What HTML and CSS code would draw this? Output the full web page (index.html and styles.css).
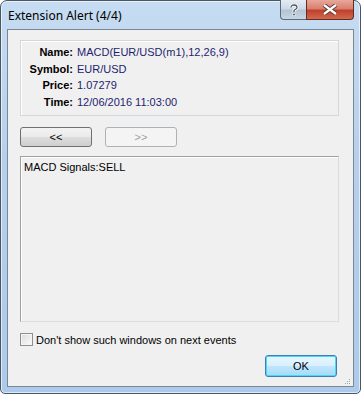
FILE: index.html
```html
<!DOCTYPE html>
<html lang="en">
<head>
    <meta charset="UTF-8">
    <title>Extension Alert (4/4)</title>
    <link rel="stylesheet" href="styles.css">
</head>
<body>
    <div class="window">
        <div class="titlebar">
            <span class="title">Extension Alert (4/4)</span>
            <div class="caption-buttons">
                <div class="cap-btn help">
                    <svg width="10" height="12" viewBox="0 0 10 12">
                        <path d="M2 3.5 C2 1.5 3.5 1 5 1 C6.8 1 8 2 8 3.4 C8 5 6 5.2 5 6.6 L5 8" fill="none" stroke="#fff" stroke-width="3"/>
                        <path d="M2 3.5 C2 1.5 3.5 1 5 1 C6.8 1 8 2 8 3.4 C8 5 6 5.2 5 6.6 L5 8" fill="none" stroke="#4a5560" stroke-width="1.3"/>
                        <rect x="3.8" y="9.3" width="2.4" height="2.4" fill="#4a5560" stroke="#fff" stroke-width="0.6"/>
                    </svg>
                </div>
                <div class="cap-btn close">
                    <svg width="16" height="11" viewBox="0 0 16 11">
                        <path d="M2 1 L14 10 M14 1 L2 10" stroke="#5a3a34" stroke-width="4.2"/>
                        <path d="M2 1 L14 10 M14 1 L2 10" stroke="#fff" stroke-width="2.2"/>
                    </svg>
                </div>
            </div>
        </div>

        <div class="client">
            <div class="info">
                <div class="row"><span class="label">Name:</span><span class="value">MACD(EUR/USD(m1),12,26,9)</span></div>
                <div class="row"><span class="label">Symbol:</span><span class="value">EUR/USD</span></div>
                <div class="row"><span class="label">Price:</span><span class="value">1.07279</span></div>
                <div class="row"><span class="label">Time:</span><span class="value">12/06/2016 11:03:00</span></div>
            </div>

            <div class="nav">
                <button class="btn">&lt;&lt;</button>
                <button class="btn" disabled>&gt;&gt;</button>
            </div>

            <div class="message">MACD Signals:SELL</div>

            <label class="check">
                <span class="box"></span>
                Don't show such windows on next events
            </label>

            <div class="footer">
                <button class="btn ok">OK</button>
            </div>
            <div class="grip">
                <svg width="7" height="7" viewBox="0 0 7 7">
                    <rect x="5" y="1" width="1" height="1" fill="#a0a8b0"/>
                    <rect x="3" y="3" width="1" height="1" fill="#a0a8b0"/>
                    <rect x="5" y="3" width="1" height="1" fill="#a0a8b0"/>
                    <rect x="1" y="5" width="1" height="1" fill="#a0a8b0"/>
                    <rect x="3" y="5" width="1" height="1" fill="#a0a8b0"/>
                    <rect x="5" y="5" width="1" height="1" fill="#a0a8b0"/>
                </svg>
            </div>
        </div>
    </div>
</body>
</html>
```

FILE: styles.css
```css
body {
    margin: 0;
    font-family: "Liberation Sans", Arial, sans-serif;
    font-size: 11px;
    background: #ffffff;
}
.window {
    width: 359px;
    height: 392px;
    border: 1px solid #4a5866;
    border-radius: 7px 7px 5px 5px;
    background: linear-gradient(to bottom, #c6dcf2 0%, #b6d0ec 40%, #aecaea 100%);
    box-shadow: inset 0 0 0 1px rgba(255, 255, 255, 0.6);
    display: flex;
    flex-direction: column;
}
.titlebar {
    height: 28px;
    display: flex;
    align-items: flex-start;
    justify-content: space-between;
    padding-left: 7px;
}
.title {
    font-family: "Noto Sans", "Open Sans", sans-serif;
    font-size: 12px;
    color: #000;
    margin-top: 6px;
}
.caption-buttons {
    display: flex;
    margin-right: 6px;
    margin-top: -1px;
}
.cap-btn {
    height: 19px;
    display: flex;
    align-items: center;
    justify-content: center;
    border: 1px solid #5a6a7a;
    border-top: none;
}
.help {
    width: 25px;
    border-radius: 0 0 0 4px;
    border-right: none;
    background: linear-gradient(to bottom, #e4ecf4 0%, #cdd9e6 45%, #b4c4d6 55%, #c8d6e4 100%);
}
.close {
    width: 46px;
    border-radius: 0 0 4px 0;
    border-color: #6a2a20;
    background: linear-gradient(to bottom, #e8a898 0%, #d88070 45%, #c0402a 55%, #d06a50 100%);
}
.client {
    flex: 1;
    margin: 0 6px 6px 6px;
    border: 1px solid #7a8896;
    background: #f0f0f0;
    padding: 10px 14px 0 12px;
    display: flex;
    flex-direction: column;
    position: relative;
}
.info {
    height: 74px;
    border: 1px solid #d2d9de;
    box-shadow: inset 1px 1px 0 #ffffff;
    padding-top: 3px;
    box-sizing: border-box;
    height: 76px;
}
.row {
    display: flex;
    height: 16.5px;
    align-items: center;
}
.label {
    width: 52px;
    text-align: right;
    font-weight: bold;
    color: #000;
    padding-right: 4px;
}
.value {
    color: #1e1e6e;
}
.nav {
    display: flex;
    gap: 13px;
    margin-top: 11px;
}
.btn {
    width: 72px;
    height: 20px;
    font-family: "Liberation Sans", Arial, sans-serif;
    font-size: 11px;
    color: #000;
    border: 1px solid #707070;
    border-radius: 3px;
    background: linear-gradient(to bottom, #f2f2f2 0%, #ebebeb 48%, #dddddd 52%, #cfcfcf 100%);
    padding: 0;
}
.btn:disabled {
    border-color: #adb2b5;
    background: #f4f4f4;
    color: #a0a0a0;
}
.message {
    margin-top: 9px;
    height: 166px;
    box-sizing: border-box;
    border: 1px solid;
    border-color: #a0a0a0 #dcdcdc #dcdcdc #a0a0a0;
    box-shadow: inset 1px 1px 0 #ffffff;
    padding: 4px 3px;
    color: #000;
}
.check {
    display: flex;
    align-items: center;
    margin-top: 11px;
    color: #000;
}
.box {
    width: 11px;
    height: 11px;
    border: 1px solid #8e8f8f;
    background: linear-gradient(135deg, #dcdcdc, #fbfbfb);
    box-shadow: inset 0 0 0 1px #f4f4f4;
    margin-right: 3px;
}
.footer {
    display: flex;
    justify-content: flex-end;
    margin-top: 9px;
}
.ok {
    width: 72px;
    height: 22px;
    border: 1px solid #3c7fb1;
    box-shadow: inset 0 0 0 1px #48d8fc;
    background: linear-gradient(to bottom, #eaf6fd 0%, #d9f0fc 48%, #bee6fd 52%, #a7d9f5 100%);
    margin-right: 2px;
}
.grip {
    position: absolute;
    right: 2px;
    bottom: 1px;
    line-height: 0;
}
```
